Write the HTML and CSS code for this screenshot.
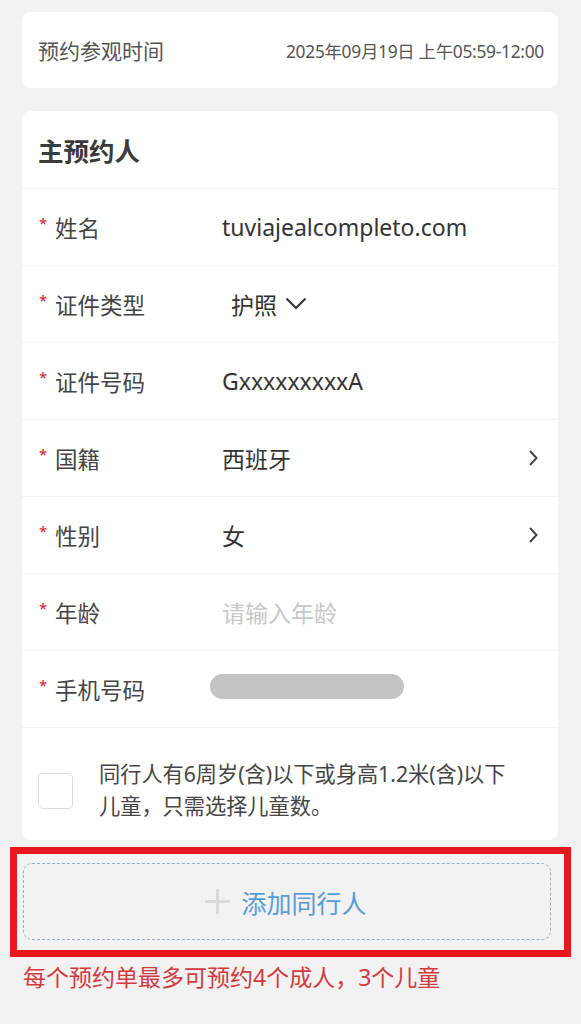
FILE: index.html
```html
<!DOCTYPE html>
<html lang="zh-CN">
<head>
<meta charset="utf-8">
<link rel="stylesheet" href="styles.css">
</head>
<body>
<div class="page">
  <section class="card time-card">
    <span class="time-label">预约参观时间</span>
    <span class="time-value">2025年09月19日 上午05:59-12:00</span>
  </section>

  <section class="card form-card">
    <div class="form-title">主预约人</div>
    <div class="row">
      <span class="label"><i class="star">*</i>姓名</span>
      <span class="value">tuviajealcompleto.com</span>
    </div>
    <div class="row">
      <span class="label"><i class="star">*</i>证件类型</span>
      <span class="value select">护照
        <svg class="down" width="22" height="13" viewBox="0 0 22 13"><path d="M1.5 1.5 L11 11 L20.5 1.5" fill="none" stroke="#333" stroke-width="2"/></svg>
      </span>
    </div>
    <div class="row">
      <span class="label"><i class="star">*</i>证件号码</span>
      <span class="value">GxxxxxxxxxA</span>
    </div>
    <div class="row">
      <span class="label"><i class="star">*</i>国籍</span>
      <span class="value">西班牙</span>
      <svg class="arrow" width="10" height="18" viewBox="0 0 10 18"><path d="M2 2 L8.5 9 L2 16" fill="none" stroke="#444" stroke-width="2"/></svg>
    </div>
    <div class="row">
      <span class="label"><i class="star">*</i>性别</span>
      <span class="value">女</span>
      <svg class="arrow" width="10" height="18" viewBox="0 0 10 18"><path d="M2 2 L8.5 9 L2 16" fill="none" stroke="#444" stroke-width="2"/></svg>
    </div>
    <div class="row">
      <span class="label"><i class="star">*</i>年龄</span>
      <span class="value placeholder">请输入年龄</span>
    </div>
    <div class="row">
      <span class="label"><i class="star">*</i>手机号码</span>
      <span class="blur"></span>
    </div>
    <div class="child-row">
      <span class="checkbox"></span>
      <p class="child-text">同行人有6周岁(含)以下或身高1.2米(含)以下儿童，只需选择儿童数。</p>
    </div>
  </section>

  <div class="highlight">
    <div class="add-btn">
      <span class="plus"></span>
      <span class="add-text">添加同行人</span>
    </div>
  </div>
  <p class="notice">每个预约单最多可预约4个成人，3个儿童</p>
</div>
</body>
</html>
```

FILE: styles.css
```css
* { box-sizing: border-box; }
html, body { margin: 0; padding: 0; }
body {
  background: #f2f2f2;
  font-family: "Noto Sans", "Noto Sans CJK SC", sans-serif;
  color: #444;
  width: 581px;
  height: 1024px;
  overflow: hidden;
}
.page {
  padding: 12px 23px 0 22px;
}
.card {
  background: #fff;
  border-radius: 9px;
}
.time-card {
  height: 76px;
  display: flex;
  align-items: center;
  justify-content: space-between;
  padding: 0 14px 0 16px;
}
.time-label {
  font-size: 21px;
  color: #555;
}
.time-value {
  font-size: 17.4px;
  color: #555;
  letter-spacing: -0.3px;
}
.form-card {
  margin-top: 23px;
  height: 729px;
}
.form-title {
  height: 78px;
  display: flex;
  align-items: center;
  padding-left: 16px;
  font-size: 25.5px;
  font-weight: 700;
  color: #3a3a3a;
  border-bottom: 1px solid #f3f3f3;
}
.row {
  height: 77px;
  display: flex;
  align-items: center;
  padding: 0 20px 0 17px;
  border-bottom: 1px solid #f3f3f3;
}
.label {
  width: 183px;
  font-size: 22.5px;
  color: #444;
  display: flex;
  align-items: center;
}
.star {
  font-style: normal;
  color: #c8202c;
  font-size: 15px;
  width: 16px;
  margin-top: -9px;
}
.value {
  flex: 1;
  font-size: 23px;
  color: #333;
}
.select {
  padding-left: 9px;
  display: flex;
  align-items: center;
  gap: 8px;
}
.down { margin-top: -2px; }
.placeholder { color: #c8c8c8; }
.blur {
  margin-left: -12px;
  width: 194px;
  height: 25px;
  border-radius: 13px;
  background: #c4c4c4;
  margin-top: -5px;
}
.child-row {
  display: flex;
  align-items: center;
  padding: 14px 32px 0 16px;
  height: 110px;
}
.checkbox {
  flex: none;
  width: 35px;
  height: 36px;
  border: 1.5px solid #ddd;
  border-radius: 5px;
  margin-right: 26px;
  margin-top: 2px;
}
.child-text {
  margin: 0;
  font-size: 21.2px;
  line-height: 32px;
  color: #444;
}
.highlight {
  margin: 7px -13px 0 -12px;
  border: 7px solid #e8181f;
  padding: 9px 13px 10px 6px;
}
.add-btn {
  height: 77px;
  border: 1.5px dashed #9aaec4;
  border-radius: 9px;
  display: flex;
  align-items: center;
  justify-content: center;
  gap: 11px;
  padding-right: 2px;
}
.plus {
  position: relative;
  width: 25px;
  height: 25px;
}
.plus::before, .plus::after {
  content: "";
  position: absolute;
  background: #d9d9d9;
}
.plus::before { left: 0; right: 0; top: 11px; height: 3px; }
.plus::after { top: 0; bottom: 0; left: 11px; width: 3px; }
.add-text {
  font-size: 25px;
  color: #5b9bd5;
}
.notice {
  margin: 2px 0 0 1px;
  font-size: 23px;
  color: #d13a3f;
}
```
